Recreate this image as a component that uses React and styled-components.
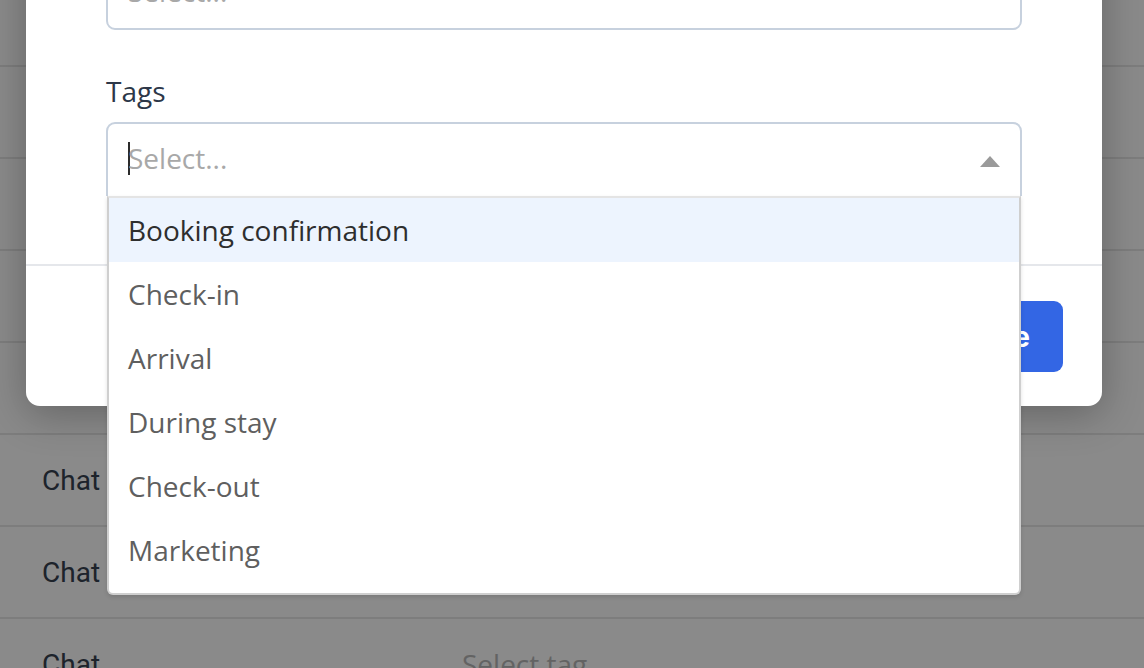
import React from "react";
import styled, { createGlobalStyle } from "styled-components";

const Global = createGlobalStyle`
  html, body { margin: 0; padding: 0; background: #fff; overflow: hidden; }
  body { font-family: "Open Sans", "Noto Sans", sans-serif; }
  * { box-sizing: border-box; }
`;

const Page = styled.div`
  width: 1144px;
  height: 668px;
  overflow: hidden;
  position: relative;
  background: #fff;
`;

const HeaderRow = styled.div`
  height: 67px;
  border-bottom: 2px solid #e8e8e8;
`;

const Row = styled.div`
  height: 92px;
  display: grid;
  grid-template-columns: 420px 1fr;
  align-items: center;
  padding-left: 42px;
  border-bottom: 2px solid #e8e8e8;
`;

const ChatCell = styled.div`
  font-family: Roboto, "Liberation Sans", sans-serif;
  font-size: 28px;
  color: #374151;
`;

const TagCell = styled.div`
  font-family: "Open Sans", sans-serif;
  font-size: 28px;
  color: #b8b8b8;
`;

const Overlay = styled.div`
  position: absolute;
  inset: 0;
  background: rgba(0, 0, 0, 0.46);
`;

const Modal = styled.div`
  position: absolute;
  left: 26px;
  bottom: 262px;
  width: 1076px;
  background: #fff;
  border-radius: 14px;
  box-shadow: 0 8px 40px rgba(0, 0, 0, 0.28);
  display: flex;
  flex-direction: column;
`;

const Body = styled.div`
  padding: 0 80px 68px;
  display: flex;
  flex-direction: column;
  gap: 45px;
`;

const Field = styled.div`
  display: flex;
  flex-direction: column;
  gap: 15px;
`;

const Label = styled.div`
  font-size: 28px;
  line-height: 32px;
  color: #2d3748;
`;

const SelectWrap = styled.div`
  position: relative;
`;

const Control = styled.div`
  height: 74px;
  border: 2px solid #c7d1de;
  border-radius: ${(p) => (p.$open ? "9px 9px 0 0" : "9px")};
  ${(p) => (p.$open ? "border-bottom: none;" : "")}
  display: flex;
  align-items: center;
  padding: 0 20px 4px 20px;
  background: #fff;
`;

const ValueBox = styled.div`
  flex: 1;
  display: flex;
  align-items: center;
`;

const Cursor = styled.span`
  width: 2px;
  height: 33px;
  background: #2b2b2b;
  margin-right: -2px;
`;

const Placeholder = styled.span`
  font-size: 28px;
  line-height: 32px;
  color: #a8a8a8;
`;

const Arrow = styled.span`
  width: 0;
  height: 0;
  border-left: 10px solid transparent;
  border-right: 10px solid transparent;
  border-bottom: 11px solid #9a9a9a;
  margin-top: 6px;
`;

const Menu = styled.div`
  position: absolute;
  top: 74px;
  left: 1px;
  right: 1px;
  background: #fff;
  border: 2px solid #cfcfcf;
  border-top: 2px solid #e4e4e4;
  border-radius: 0 0 6px 6px;
  padding-bottom: 11px;
  box-shadow: 0 2px 4px rgba(0, 0, 0, 0.12);
  z-index: 2;
`;

const Option = styled.div`
  height: 64px;
  display: flex;
  align-items: center;
  padding: 0 19px;
  font-size: 28px;
  color: ${(p) => (p.$active ? "#2e2e2e" : "#5f5f5f")};
  background: ${(p) => (p.$active ? "#edf4fe" : "#fff")};
`;

const Footer = styled.div`
  border-top: 2px solid #e5e7eb;
  padding: 35px 39px 34px;
  display: flex;
  justify-content: flex-end;
`;

const SaveButton = styled.button`
  height: 71px;
  padding: 0 33px;
  border: none;
  border-radius: 9px;
  background: #3366e4;
  color: #fff;
  font-family: Inter, "Open Sans", sans-serif;
  font-weight: 700;
  font-size: 28px;
`;

const options = [
  "Booking confirmation",
  "Check-in",
  "Arrival",
  "During stay",
  "Check-out",
  "Marketing",
];

export default function App() {
  return (
    <>
      <Global />
      <Page>
        <HeaderRow />
        {Array.from({ length: 7 }).map((_, i) => (
          <Row key={i}>
            <ChatCell>Chat</ChatCell>
            <TagCell>Select tag</TagCell>
          </Row>
        ))}
        <Overlay>
          <Modal>
            <Body>
              <Field>
                <Label>Channel</Label>
                <Control>
                  <ValueBox>
                    <Placeholder>Select...</Placeholder>
                  </ValueBox>
                </Control>
              </Field>
              <Field>
                <Label>Tags</Label>
                <SelectWrap>
                  <Control $open>
                    <ValueBox>
                      <Cursor />
                      <Placeholder>Select...</Placeholder>
                    </ValueBox>
                    <Arrow />
                  </Control>
                  <Menu>
                    {options.map((o, i) => (
                      <Option key={o} $active={i === 0}>
                        {o}
                      </Option>
                    ))}
                  </Menu>
                </SelectWrap>
              </Field>
            </Body>
            <Footer>
              <SaveButton>Save</SaveButton>
            </Footer>
          </Modal>
        </Overlay>
      </Page>
    </>
  );
}
